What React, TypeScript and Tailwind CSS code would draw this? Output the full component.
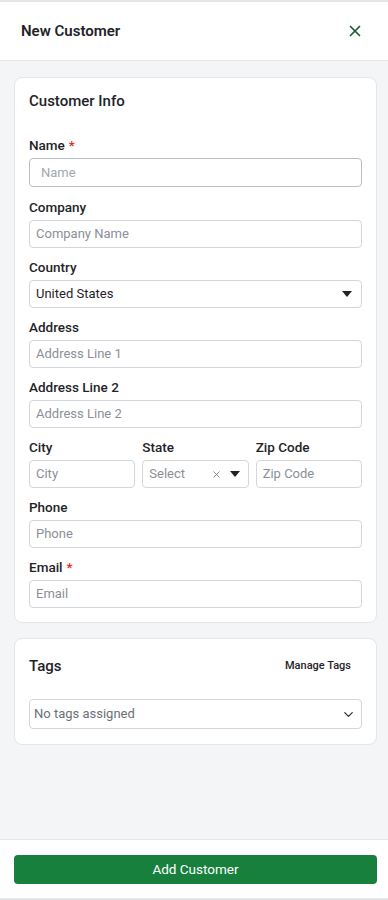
import { X, ChevronDown } from "lucide-react";

function Caret() {
  return (
    <svg width="10" height="6" viewBox="0 0 10 6" className="shrink-0">
      <path d="M0 0h10L5 6z" fill="#1f2328" />
    </svg>
  );
}

function Label({ text, required }: { text: string; required?: boolean }) {
  return (
    <p className="text-[13.5px] leading-[18px] font-medium text-[#1f2328] mb-[4px]">
      {text}
      {required && <span className="text-[#d92d20] ml-[4px]">*</span>}
    </p>
  );
}

function Input({ placeholder }: { placeholder: string }) {
  return (
    <div className="h-[28px] rounded-[4px] border border-[#d3d6dc] bg-white px-[6px] flex items-center text-[13px] text-[#8b9098]">
      {placeholder}
    </div>
  );
}

export default function App() {
  return (
    <div
      className="w-[388px] h-[900px] flex flex-col bg-[#f4f5f7] text-[#1f2328]"
      style={{ fontFamily: "Roboto, 'Noto Sans', sans-serif" }}
    >
      <div className="h-[61px] shrink-0 bg-white border-t-2 border-b border-[#e4e6ea] flex items-center justify-between pl-[21px] pr-[24px]">
        <h1 className="text-[15px] font-semibold">New Customer</h1>
        <X size={18} strokeWidth={2.3} className="text-[#1d5e36]" />
      </div>

      <div className="flex-1 pl-[14px] pr-[11px] pt-[16px] flex flex-col gap-[15px]">
        <div className="bg-white border border-[#e4e6ea] rounded-[8px] px-[14px] pt-[13px] pb-[14px]">
          <h2 className="text-[15px] leading-[20px] font-medium mb-[25px]">Customer Info</h2>

          <div className="flex flex-col gap-[10px]">
            <div>
              <Label text="Name" required />
              <div className="h-[29px] mb-[1px] rounded-[4px] border border-[#b9bdc5] bg-white px-[11px] flex items-center text-[13px] text-[#a3a8b0]">
                Name
              </div>
            </div>
            <div>
              <Label text="Company" />
              <Input placeholder="Company Name" />
            </div>
            <div>
              <Label text="Country" />
              <div className="h-[28px] rounded-[4px] border border-[#d3d6dc] bg-white pl-[6px] pr-[9px] flex items-center justify-between text-[13px] text-[#1f2328]">
                United States
                <Caret />
              </div>
            </div>
            <div>
              <Label text="Address" />
              <Input placeholder="Address Line 1" />
            </div>
            <div>
              <Label text="Address Line 2" />
              <Input placeholder="Address Line 2" />
            </div>
            <div className="grid grid-cols-3 gap-[7px]">
              <div>
                <Label text="City" />
                <Input placeholder="City" />
              </div>
              <div>
                <Label text="State" />
                <div className="h-[28px] rounded-[4px] border border-[#d3d6dc] bg-white pl-[6px] pr-[8px] flex items-center text-[13px] text-[#8b9098]">
                  <span className="flex-1">Select</span>
                  <X size={11} strokeWidth={1.6} className="text-[#5f646c] mr-[8px]" />
                  <Caret />
                </div>
              </div>
              <div>
                <Label text="Zip Code" />
                <Input placeholder="Zip Code" />
              </div>
            </div>
            <div>
              <Label text="Phone" />
              <Input placeholder="Phone" />
            </div>
            <div>
              <Label text="Email" required />
              <Input placeholder="Email" />
            </div>
          </div>
        </div>

        <div className="bg-white border border-[#e4e6ea] rounded-[8px] px-[14px] pt-[15px] pb-[15px]">
          <div className="h-[24px] flex items-center justify-between mb-[21px]">
            <h2 className="text-[15px] font-medium">Tags</h2>
            <button className="text-[11px] font-medium text-[#1f2328] pr-[11px]">Manage Tags</button>
          </div>
          <div className="h-[30px] rounded-[4px] border border-[#d3d6dc] bg-white pl-[4px] pr-[5px] flex items-center justify-between text-[13px] text-[#6b7079]">
            No tags assigned
            <ChevronDown size={15} strokeWidth={1.8} className="text-[#1f2328]" />
          </div>
        </div>
      </div>

      <div className="h-[61px] shrink-0 bg-white border-t border-b-2 border-[#e4e6ea] pl-[14px] pr-[11px] flex items-center">
        <button className="w-full h-[29px] rounded-[4px] bg-[#17803d] text-white text-[13.5px] font-normal">
          Add Customer
        </button>
      </div>
    </div>
  );
}
